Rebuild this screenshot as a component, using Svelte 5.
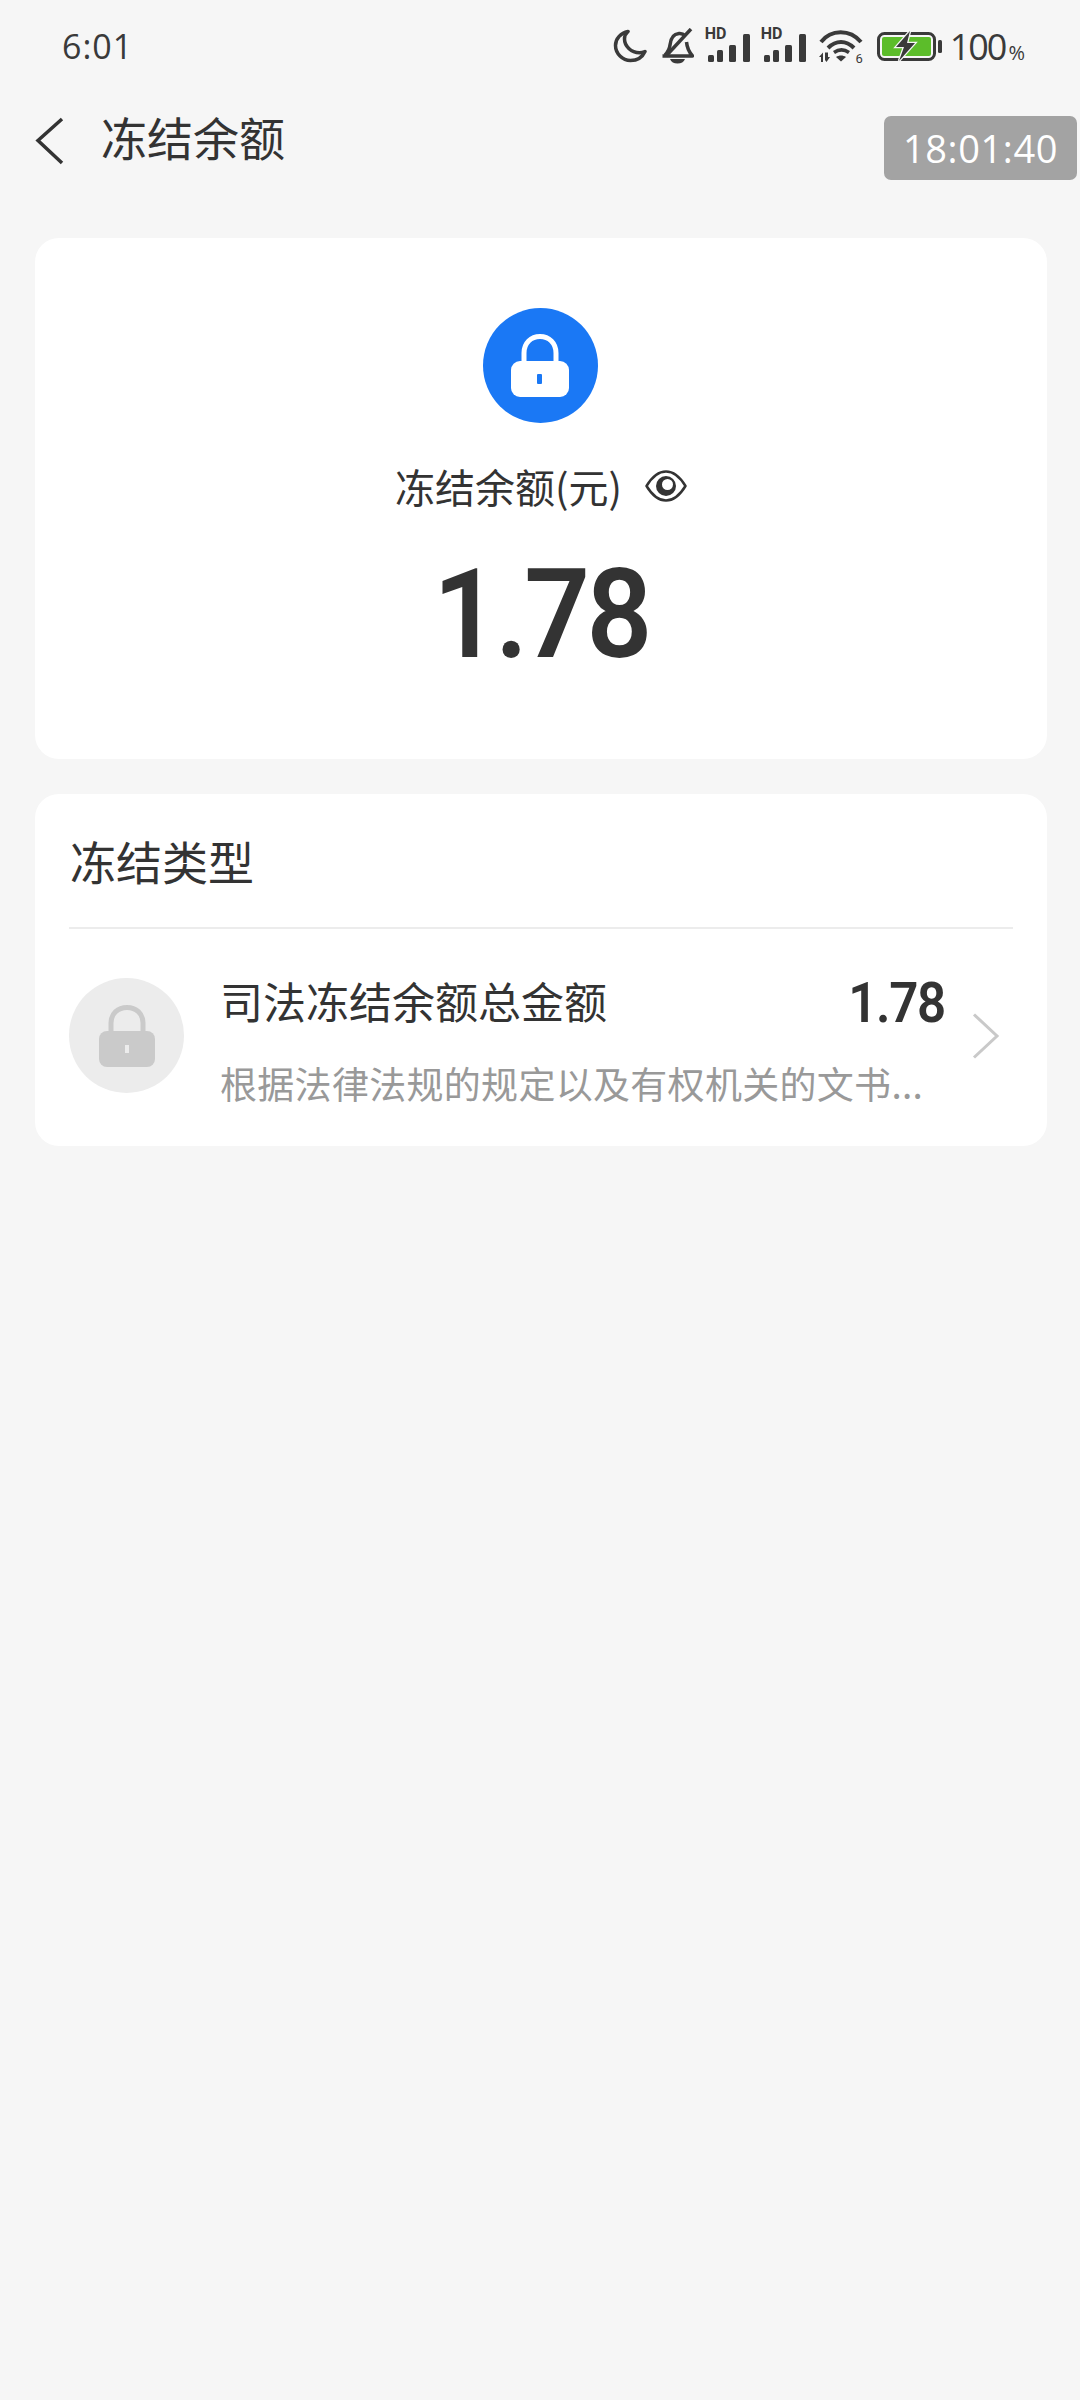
<script>
	let title = '冻结余额';
	let amount = '1.78';
</script>

<div class="page">
	<div class="status">
		<span class="clock">6:01</span>
		<div class="status-right">
			<svg class="moon" width="34" height="34" viewBox="0 0 34 34"><path d="M15 2.500C8 4 2.500 9.500 2.500 16.500 2.500 24.500 9.500 31.500 17.500 31.500c6.500 0 12-3.500 14.500-9-2 .8-3.800 1.200-5.500 1.200C18 23.700 11.500 17 11.500 10c0-2.800 1.200-5.500 3.500-7.500z" fill="none" stroke="#3a3a3a" stroke-width="3.500" stroke-linejoin="round"/></svg>
			<svg class="bell" width="34" height="36" viewBox="0 0 34 36"><path d="M5 27c2.500-2.500 4.500-5.500 5-10 .6-6.500 3.500-11 9-11.500 2.500-.2 4.500.5 6 2M26.500 14c.5 5.500 2.500 10 6 14H2.500" fill="none" stroke="#3a3a3a" stroke-width="3.500" stroke-linejoin="round"/><path d="M6 28 31 1" stroke="#3a3a3a" stroke-width="3.500"/><path d="M10 31h15c-1 3-4 4.500-7.500 4.500S11 34 10 31z" fill="#3a3a3a"/></svg>
			{#each [0, 1] as s}
				<div class="signal" class:second={s === 1}>
					<span class="hd">HD</span>
					<svg width="46" height="30" viewBox="0 0 46 30"><g fill="#3a3a3a"><rect x="3" y="21" width="6" height="7" rx="1.500"/><rect x="12" y="16" width="6" height="12" rx="1.500"/><rect x="24" y="11" width="7" height="17" rx="1.500"/><rect x="38" y="0" width="7" height="28" rx="1.500"/></g></svg>
				</div>
			{/each}
			<div class="wifi">
				<svg width="44" height="34" viewBox="0 0 44 34"><g fill="none" stroke="#3a3a3a" stroke-width="4"><path d="M2 13C12 0 31 0 42 13"/><path d="M9 19c8-8 18-8 26 0"/></g><path d="M15 23.500c5-3.500 10-3.500 15 0" fill="none" stroke="#3a3a3a" stroke-width="3.500"/><path d="M17 28c3-2 7-2 10 0l-5 4.500z" fill="#3a3a3a"/><path d="M0 28l4-4.500V33h-2v-5zM6 23.500h3V28h2l-3.500 5L6 31z" fill="#3a3a3a"/></svg>
				<span class="wifi-n">6</span>
			</div>
			<svg class="batt" width="66" height="32" viewBox="0 0 66 32"><rect x="1.500" y="3.500" width="56" height="26" rx="6" fill="none" stroke="#3a3a3a" stroke-width="3"/><rect x="5" y="7" width="49" height="19" rx="2" fill="#5cbd2a"/><rect x="61" y="10" width="4" height="13" rx="1.500" fill="#3a3a3a"/><path d="M33 1 19 17h8l-5 14 16-18h-8z" fill="#3a3a3a" stroke="#f6f6f6" stroke-width="2.500" paint-order="stroke"/></svg>
			<span class="pct">100<small>%</small></span>
		</div>
	</div>

	<header class="nav">
		<svg class="back" width="30" height="48" viewBox="0 0 30 48"><path d="M27 2 3 23.500 27 46" fill="none" stroke="#333" stroke-width="3.500"/></svg>
		<span class="nav-title">{title}</span>
		<span class="stamp">18:01:40</span>
	</header>

	<section class="card summary">
		<div class="lock-circle main">
			<svg width="60" height="66" viewBox="0 0 60 66">
				<path d="M14 32V20C14 10 21 3.500 30 3.500S46 10 46 20v12" fill="none" stroke="#fff" stroke-width="5"/>
				<rect x="1" y="28" width="58" height="36" rx="9" fill="#fff"/>
				<rect x="27" y="41" width="5" height="10" rx="1" fill="#1a78f5"/>
			</svg>
		</div>
		<div class="label">
			<span>冻结余额(元)</span>
			<svg width="42" height="34" viewBox="0 0 42 34">
				<path d="M1.500 17C7 8 13 2.500 21 2.500S35 8 40.500 17C35 26 29 31.500 21 31.500S7 26 1.500 17z" fill="none" stroke="#333" stroke-width="2.500" stroke-linejoin="round"/>
				<circle cx="21" cy="17" r="10" fill="#333"/>
				<circle cx="22.500" cy="15.500" r="5.500" fill="#fff"/>
			</svg>
		</div>
		<div class="big">{amount}</div>
	</section>

	<section class="card types">
		<h2>冻结类型</h2>
		<div class="row">
			<div class="lock-circle grey">
				<svg width="58" height="64" viewBox="0 0 58 64">
					<path d="M13 30V19C13 9.500 20 3.500 29 3.500S45 9.500 45 19v11" fill="none" stroke="#cacaca" stroke-width="5"/>
					<rect x="1" y="27" width="56" height="36" rx="8" fill="#cacaca"/>
					<rect x="27" y="41" width="4" height="8" fill="#ececec"/>
				</svg>
			</div>
			<div class="row-body">
				<div class="row-top">
					<span class="row-name">司法冻结余额总金额</span>
					<span class="row-amount">{amount}</span>
				</div>
				<div class="row-desc">根据法律法规的规定以及有权机关的文书...</div>
			</div>
			<svg class="chev" width="28" height="46" viewBox="0 0 28 46"><path d="M2 1.500 25 23 2 44.500" fill="none" stroke="#c9c9c9" stroke-width="3"/></svg>
		</div>
	</section>
</div>

<style>
	:global(body) {
		background: #f6f6f6;
	}
	.page {
		height: 2400px;
		background: #f6f6f6;
		font-family: "Noto Sans CJK SC", "Roboto", sans-serif;
		color: #333;
		overflow: hidden;
	}
	.status {
		height: 92px;
		display: flex;
		justify-content: space-between;
		align-items: center;
		padding: 0 55px 0 62px;
	}
	.clock {
		font-family: "Open Sans", sans-serif;
		font-weight: 500;
		font-size: 34px;
		color: #3a3a3a;
		letter-spacing: 1px;
	}
	.status-right {
		display: flex;
		align-items: center;
	}
	.bell {
		margin-left: 13px;
	}
	.signal {
		position: relative;
		width: 46px;
		height: 36px;
		margin-left: 11px;
		display: flex;
		align-items: flex-end;
	}
	.signal.second {
		margin-left: 10px;
	}
	.hd {
		position: absolute;
		left: 0;
		top: -2px;
		font-family: "Roboto", sans-serif;
		font-weight: 700;
		font-size: 16px;
		line-height: 16px;
		color: #3a3a3a;
	}
	.wifi {
		position: relative;
		width: 44px;
		height: 34px;
		margin-left: 12px;
	}
	.wifi-n {
		position: absolute;
		right: 0;
		bottom: -3px;
		font-family: "Roboto", sans-serif;
		font-size: 13px;
		line-height: 14px;
		color: #3a3a3a;
	}
	.batt {
		margin-left: 14px;
	}
	.pct {
		font-family: "Open Sans", sans-serif;
		font-weight: 500;
		font-size: 36px;
		color: #3a3a3a;
		margin-left: 7px;
		letter-spacing: -2px;
	}
	.pct small {
		font-size: 20px;
		font-weight: 400;
		letter-spacing: 0;
		margin-left: 3px;
	}
	.nav {
		position: relative;
		height: 97px;
		display: flex;
		align-items: center;
		padding-left: 35px;
	}
	.nav-title {
		font-size: 46px;
		margin: 0 0 9px 36px;
	}
	.stamp {
		position: absolute;
		top: 24px;
		right: 3px;
		width: 193px;
		height: 64px;
		border-radius: 7px;
		background: #a3a3a3;
		color: #fff;
		font-family: "Open Sans", sans-serif;
		font-size: 38px;
		line-height: 64px;
		text-align: center;
		letter-spacing: 0.6px;
	}
	.card {
		margin: 0 33px 0 35px;
		background: #fff;
		border-radius: 24px;
	}
	.summary {
		margin-top: 49px;
		height: 521px;
		display: flex;
		flex-direction: column;
		align-items: center;
		padding-top: 70px;
		box-sizing: border-box;
	}
	.lock-circle {
		width: 115px;
		height: 115px;
		border-radius: 50%;
		background: #1a78f5;
		display: flex;
		align-items: center;
		justify-content: center;
		flex-shrink: 0;
	}
	.lock-circle.main {
		margin-right: 2px;
	}
	.lock-circle.grey {
		background: #ececec;
	}
	.label {
		margin-top: 38px;
		display: flex;
		align-items: center;
		gap: 23px;
		font-size: 40px;
		line-height: 50px;
	}
	.big {
		margin-top: 31px;
		font-family: "Roboto", sans-serif;
		font-weight: 600;
		font-size: 124px;
		line-height: 146px;
		letter-spacing: -4px;
		transform: scaleX(0.93);
	}
	.types {
		margin-top: 35px;
		height: 352px;
		padding: 0 34px;
		box-sizing: border-box;
	}
	h2 {
		margin: 0;
		height: 135px;
		line-height: 132px;
		padding-left: 1px;
		font-size: 46px;
		font-weight: 400;
		border-bottom: 2px solid #ececec;
		box-sizing: border-box;
	}
	.row {
		display: flex;
		align-items: flex-start;
		margin-top: 49px;
	}
	.row-body {
		margin-left: 36px;
		width: 725px;
		flex-shrink: 0;
	}
	.row-top {
		display: flex;
		justify-content: space-between;
		align-items: center;
		height: 50px;
	}
	.row-name {
		font-size: 43px;
		margin-top: -6px;
	}
	.row-amount {
		font-family: "Roboto", sans-serif;
		font-weight: 600;
		font-size: 55px;
		line-height: 50px;
		letter-spacing: -1.500px;
		transform: scaleX(0.93);
		transform-origin: right center;
	}
	.row-desc {
		margin-top: 32px;
		font-size: 37px;
		line-height: 46px;
		letter-spacing: 0.3px;
		color: #999;
		white-space: nowrap;
	}
	.chev {
		margin: 35px 0 0 27px;
	}
</style>
